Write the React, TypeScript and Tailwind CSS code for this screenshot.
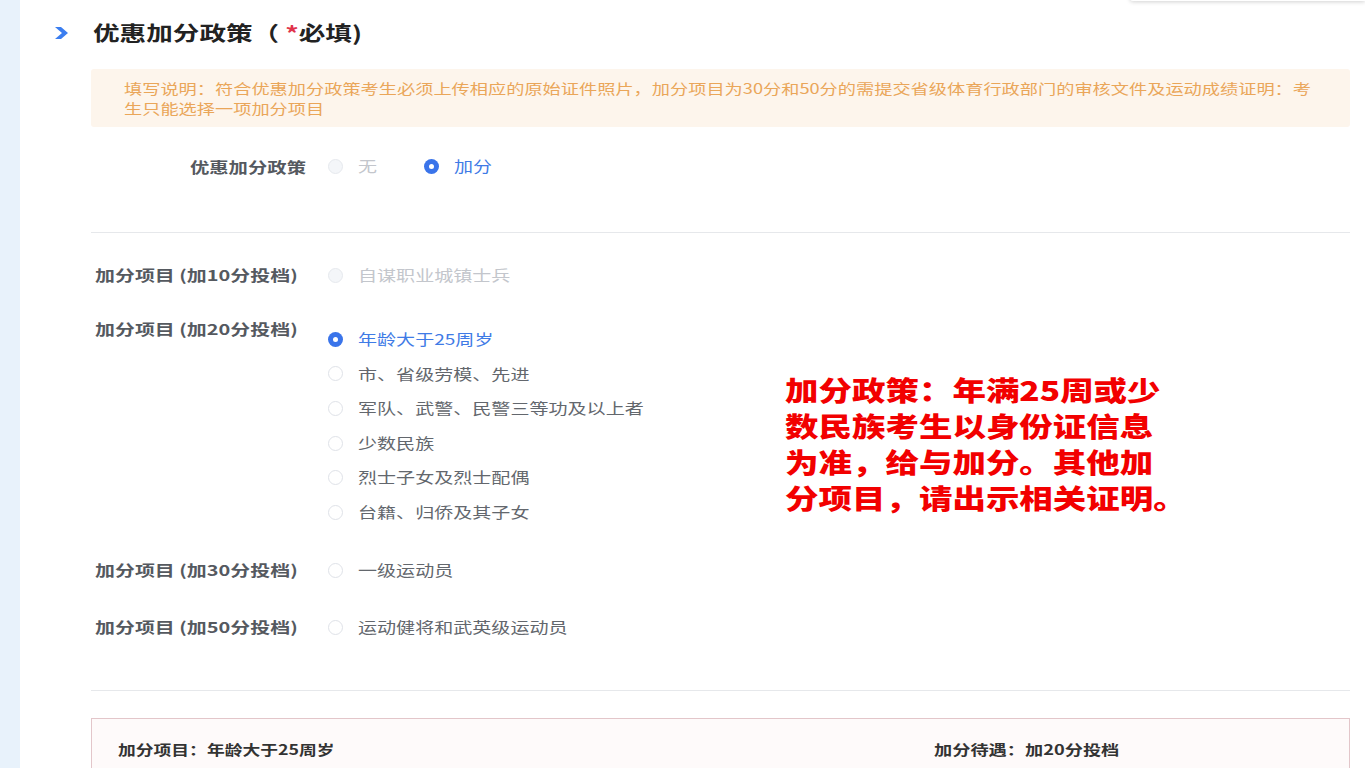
import React from "react";

const font = { fontFamily: '"Noto Sans CJK SC", "Noto Sans", sans-serif' };

function Radio({ state }: { state: "on" | "off" | "disabled" }) {
  if (state === "on") {
    return (
      <span className="flex h-[15px] w-[15px] shrink-0 items-center justify-center rounded-full bg-[#3a74ea]">
        <span className="h-[5px] w-[5px] rounded-full bg-white" />
      </span>
    );
  }
  if (state === "disabled") {
    return <span className="h-[15px] w-[15px] shrink-0 rounded-full border border-[#e6e9ee] bg-[#f4f6f9]" />;
  }
  return <span className="h-[15px] w-[15px] shrink-0 rounded-full border border-[#dfe2e8] bg-white" />;
}

function Option({
  text,
  state,
  h = "h-[35px]",
}: {
  text: string;
  state: "on" | "off" | "disabled";
  h?: string;
}) {
  const color =
    state === "on" ? "text-[#3f7be6]" : state === "disabled" ? "text-[#c3c6cc]" : "text-[#63676d]";
  return (
    <div className={`flex items-center gap-[15px] ${h}`}>
      <Radio state={state} />
      <span className={`inline-block origin-left scale-x-[1.27] whitespace-nowrap text-[15px] ${color}`}>{text}</span>
    </div>
  );
}

function GroupLabel({ text }: { text: string }) {
  return (
    <div className="flex h-[35px] w-[237px] shrink-0 items-center pl-[4px]">
      <span className="inline-block origin-left scale-x-[1.33] whitespace-nowrap text-[15px] font-bold text-[#55595f]">
        {text}
      </span>
    </div>
  );
}

export default function App() {
  return (
    <div className="flex h-[768px] w-[1365px] overflow-hidden bg-white" style={font}>
      <div className="w-[20px] shrink-0 bg-[#e8f2fb]" />
      <div className="relative flex-1 bg-white">
        {/* top-right panel edge */}
        <div className="absolute right-0 top-[-20px] h-[21px] w-[235px] rounded-bl-[3px] bg-white shadow-[0_1px_4px_rgba(0,0,0,0.18)]" />

        {/* title */}
        <div className="flex items-center pl-[35px] pt-[22px]">
          <svg width="13" height="12" viewBox="0 0 13 12" className="shrink-0">
            <polygon points="0,0 6,0 13,6 6,12 0,12 7,6" fill="#3b7ef0" />
          </svg>
          <h1 className="ml-[25px] inline-block h-[22px] origin-left scale-x-[1.33] whitespace-nowrap text-[20px] font-bold leading-[22px] text-[#222]">
            优惠加分政策（ <span className="text-[#e0324a]">*</span>必填)
          </h1>
        </div>

        <div className="ml-[71px] w-[1259px]">
          {/* notice */}
          <div className="mt-[25px] rounded-[3px] bg-[#fdf5ec] py-[9px] pl-[33px] text-[14px] leading-[20px] text-[#eaa659]">
            <div className="origin-left scale-x-[1.3] whitespace-nowrap">
              填写说明：符合优惠加分政策考生必须上传相应的原始证件照片，加分项目为30分和50分的需提交省级体育行政部门的审核文件及运动成绩证明：考
            </div>
            <div className="origin-left scale-x-[1.3] whitespace-nowrap">生只能选择一项加分项目</div>
          </div>

          {/* policy row */}
          <div className="mt-[24px] flex h-[30px] items-center">
            <div className="w-[217px] pr-[2px] text-right">
              <span className="inline-block origin-right scale-x-[1.29] whitespace-nowrap text-[15px] font-bold text-[#55595f]">
                优惠加分政策
              </span>
            </div>
            <div className="ml-[20px] flex items-center gap-[15px]">
              <Radio state="disabled" />
              <span className="inline-block origin-left scale-x-[1.27] text-[15px] text-[#c3c6cc]">无</span>
            </div>
            <div className="ml-[51px] flex items-center gap-[15px]">
              <Radio state="on" />
              <span className="inline-block origin-left scale-x-[1.27] text-[15px] text-[#3f7be6]">加分</span>
            </div>
          </div>

          <div className="mt-[51px] h-px bg-[#e6e8eb]" />

          {/* 10 */}
          <div className="mt-[25px] flex">
            <GroupLabel text="加分项目 (加10分投档)" />
            <Option text="自谋职业城镇士兵" state="disabled" />
          </div>

          {/* 20 */}
          <div className="mt-[19px] flex">
            <GroupLabel text="加分项目 (加20分投档)" />
            <div className="flex flex-col pt-[10px]">
              <Option text="年龄大于25周岁" state="on" h="h-[34.6px]" />
              <Option text="市、省级劳模、先进" state="off" h="h-[34.6px]" />
              <Option text="军队、武警、民警三等功及以上者" state="off" h="h-[34.6px]" />
              <Option text="少数民族" state="off" h="h-[34.6px]" />
              <Option text="烈士子女及烈士配偶" state="off" h="h-[34.6px]" />
              <Option text="台籍、归侨及其子女" state="off" h="h-[34.6px]" />
            </div>
          </div>

          {/* 30 */}
          <div className="mt-[23px] flex">
            <GroupLabel text="加分项目 (加30分投档)" />
            <Option text="一级运动员" state="off" />
          </div>

          {/* 50 */}
          <div className="mt-[22px] flex">
            <GroupLabel text="加分项目 (加50分投档)" />
            <Option text="运动健将和武英级运动员" state="off" />
          </div>

          <div className="mt-[45px] h-px bg-[#e6e8eb]" />

          {/* summary box */}
          <div className="mt-[27px] grid h-[80px] grid-cols-[816px_1fr] border border-[#e3c6ca] bg-[#fefafa] pl-[26px] pt-[20px]">
            <div className="origin-left scale-x-[1.27] whitespace-nowrap text-[14px] font-bold leading-[20px] text-[#333]">
              加分项目：年龄大于25周岁
            </div>
            <div className="origin-left scale-x-[1.3] whitespace-nowrap text-[14px] font-bold leading-[20px] text-[#333]">
              加分待遇：加20分投档
            </div>
          </div>
        </div>

        {/* red annotation */}
        <div className="absolute left-[765px] top-[372px] origin-left scale-x-[1.24] text-[27px] font-black leading-[36px] text-[#f20000]">
          <div className="whitespace-nowrap">加分政策：年满25周或少</div>
          <div className="whitespace-nowrap">数民族考生以身份证信息</div>
          <div className="whitespace-nowrap">为准，给与加分。其他加</div>
          <div className="whitespace-nowrap">分项目，请出示相关证明。</div>
        </div>
      </div>
    </div>
  );
}
